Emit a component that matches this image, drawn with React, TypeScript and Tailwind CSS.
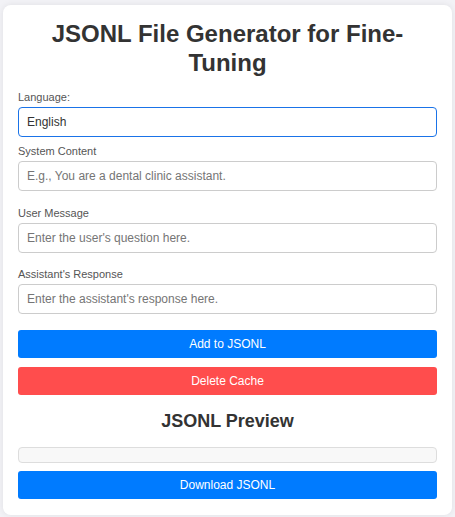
const fields = [
  { id: 'system', label: 'System Content', placeholder: 'E.g., You are a dental clinic assistant.', gap: 'mb-[16px]' },
  { id: 'user', label: 'User Message', placeholder: "Enter the user's question here.", gap: 'mb-[15px]' },
  { id: 'assistant', label: "Assistant's Response", placeholder: "Enter the assistant's response here.", gap: 'mb-[16px]' },
]

export default function App() {
  return (
    <div className="min-h-screen bg-[#f2f2f6] px-[3px] pt-[5px] pb-[2px] font-['Liberation_Sans',Arial,sans-serif]">
      <div className="rounded-lg bg-white px-[15px] pt-[15px] pb-[16px] shadow-[0_0_6px_rgba(0,0,0,0.08)]">
        <h1 className="mb-[13px] text-center text-[24px] leading-[1.2] font-bold text-[#333]">
          JSONL File Generator for Fine-Tuning
        </h1>

        <div className="mb-[8px]">
          <label className="mb-[3px] block text-[11px] leading-[13px] text-[#555]">Language:</label>
          <input
            defaultValue="English"
            className="block h-[30px] w-full rounded border border-[#1a73e8] px-[8px] text-[12px] text-[#333] outline-none"
          />
        </div>

        {fields.map((f) => (
          <div key={f.id} className={f.gap}>
            <label className="mb-[3px] block text-[11px] leading-[13px] text-[#555]">{f.label}</label>
            <input
              placeholder={f.placeholder}
              className="block h-[30px] w-full rounded border border-[#ccc] px-[8px] text-[12px] text-[#333] outline-none placeholder:text-[#757575]"
            />
          </div>
        ))}

        <div className="flex flex-col gap-[9px]">
          <button className="h-[28px] w-full rounded-[3px] bg-[#007bff] text-[12px] text-white">Add to JSONL</button>
          <button className="h-[28px] w-full rounded-[3px] bg-[#ff4d4d] text-[12px] text-white">Delete Cache</button>
        </div>

        <h2 className="my-[15px] text-center text-[18px] leading-[22px] font-bold text-[#333]">JSONL Preview</h2>

        <div className="mb-[8px] h-[16px] rounded border border-[#ddd] bg-[#f8f8f8]" />

        <button className="h-[28px] w-full rounded-[3px] bg-[#007bff] text-[12px] text-white">Download JSONL</button>
      </div>
    </div>
  )
}
